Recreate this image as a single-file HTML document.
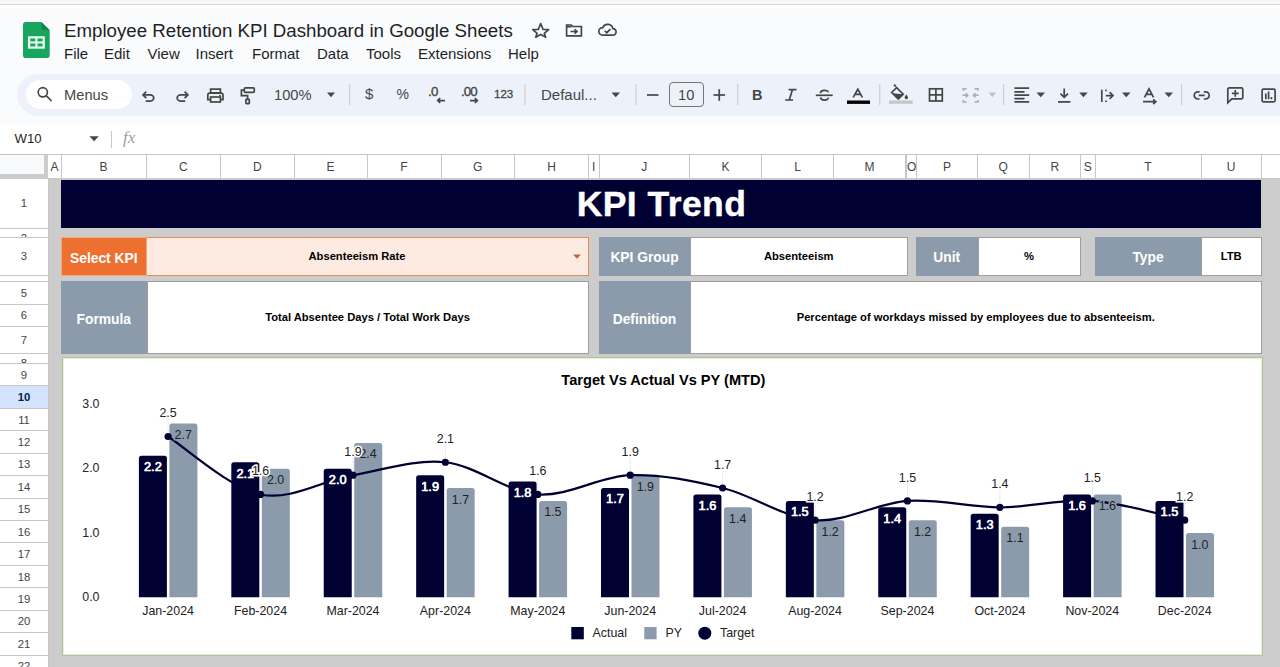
<!DOCTYPE html>
<html><head><meta charset="utf-8">
<style>
*{box-sizing:border-box;margin:0;padding:0}
html,body{width:1280px;height:667px;overflow:hidden;background:#f9fbfd;font-family:"Liberation Sans",sans-serif}
body{position:relative}
.a{position:absolute}
.t{position:absolute;white-space:nowrap;line-height:1}
.cell{position:absolute;display:flex;align-items:center;justify-content:center;white-space:nowrap;font-weight:bold;line-height:1}
.lab{background:#8c9bab;color:#fff;font-size:13.8px}
.val{background:#fff;color:#000;font-size:11.2px;border:1px solid #9e9e9e}
.ch{position:absolute;top:155px;height:23px;display:flex;align-items:center;justify-content:center;color:#444;font-size:12px;background:#fff}
.rh{position:absolute;left:0;width:48px;color:#444;font-size:11.3px;background:#fff;overflow:hidden}
svg text{font-family:"Liberation Sans",sans-serif}
</style></head><body>
<div class="a" style="left:0;top:0;width:1280px;height:4px;background:#f8f8f8"></div><div class="a" style="left:0;top:4px;width:1280px;height:1px;background:#dcdcdc"></div><div class="a" style="left:0;top:5px;width:1280px;height:2.5px;background:#fff"></div>
<svg class="a" style="left:22.5px;top:21.8px" width="28" height="37" viewBox="0 0 28 37">
<path d="M2.8 0H18.4L26.7 8.3V33.3A2.8 2.8 0 0 1 23.9 36.1H2.8A2.8 2.8 0 0 1 0 33.3V2.8A2.8 2.8 0 0 1 2.8 0Z" fill="#18a55d"/>
<path d="M18.4 0L26.7 8.3H20.9A2.5 2.5 0 0 1 18.4 5.8Z" fill="#0f8a48"/>
<rect x="6.1" y="15.35" width="14.6" height="10.2" fill="none" stroke="#e8f7ee" stroke-width="2.3"/>
<line x1="6.1" y1="20.45" x2="20.7" y2="20.45" stroke="#e8f7ee" stroke-width="2.1"/>
<line x1="13.4" y1="15.35" x2="13.4" y2="25.55" stroke="#e8f7ee" stroke-width="2.1"/>
</svg>
<div class="t" style="left:64px;top:21.5px;font-size:18.7px;color:#1f1f1f">Employee Retention KPI Dashboard in Google Sheets</div>
<div class="t" style="left:64px;top:45.5px;font-size:15px;color:#1f1f1f">File</div>
<div class="t" style="left:104px;top:45.5px;font-size:15px;color:#1f1f1f">Edit</div>
<div class="t" style="left:147.5px;top:45.5px;font-size:15px;color:#1f1f1f">View</div>
<div class="t" style="left:195.5px;top:45.5px;font-size:15px;color:#1f1f1f">Insert</div>
<div class="t" style="left:252px;top:45.5px;font-size:15px;color:#1f1f1f">Format</div>
<div class="t" style="left:317px;top:45.5px;font-size:15px;color:#1f1f1f">Data</div>
<div class="t" style="left:366px;top:45.5px;font-size:15px;color:#1f1f1f">Tools</div>
<div class="t" style="left:418px;top:45.5px;font-size:15px;color:#1f1f1f">Extensions</div>
<div class="t" style="left:508px;top:45.5px;font-size:15px;color:#1f1f1f">Help</div>
<div class="a" style="left:17px;top:74px;width:1300px;height:42px;border-radius:21px;background:#edf2fa"></div>
<div class="a" style="left:26px;top:80px;width:105.5px;height:29px;border-radius:14.5px;background:#fff"></div>
<div class="t" style="left:64px;top:87.5px;font-size:14.7px;color:#444746">Menus</div>
<div class="t" style="left:274px;top:87.5px;font-size:14.7px;color:#444746">100%</div>
<div class="t" style="left:541px;top:86.5px;font-size:15px;color:#444746">Defaul...</div>
<div class="t" style="left:494px;top:88.8px;font-size:11.5px;color:#444746;-webkit-text-stroke:0.3px #444746">123</div>
<div class="t" style="left:678px;top:87.5px;font-size:14.7px;color:#444746">10</div>
<div class="a" style="left:669px;top:82px;width:35px;height:24.5px;border:1px solid #747775;border-radius:4px"></div>
<div class="a" style="left:0;top:123.5px;width:1280px;height:31px;background:#fff;border-bottom:1px solid #c7c7c7"></div>
<div class="t" style="left:14.5px;top:131.5px;font-size:13.2px;color:#1f1f1f">W10</div>
<div class="a" style="left:111px;top:130.5px;width:1px;height:17px;background:#c7c7c7"></div>
<div class="t" style="left:123px;top:129px;font-size:17px;color:#9aa0a6;font-family:'Liberation Serif',serif;font-style:italic">fx</div>
<div class="t" style="left:365px;top:86.3px;font-size:15px;color:#444746">$</div>
<div class="t" style="left:396.5px;top:86.7px;font-size:14px;color:#444746">%</div>
<div class="t" style="left:428px;top:85.3px;font-size:13.3px;color:#444746;letter-spacing:-0.6px;-webkit-text-stroke:0.35px #444746">.0</div>
<div class="t" style="left:461px;top:85.3px;font-size:13.3px;color:#444746;letter-spacing:-0.9px;-webkit-text-stroke:0.35px #444746">.00</div>
<div class="t" style="left:752px;top:88.3px;font-size:14.5px;font-weight:bold;color:#444746">B</div>
<svg class="a" style="left:0;top:0" width="1280" height="160"><circle cx="42.8" cy="92.3" r="4.6" fill="none" stroke="#444746" stroke-width="1.7" stroke-width="1.8"/><line x1="46.2" y1="95.7" x2="51.5" y2="101" fill="none" stroke="#444746" stroke-width="1.7" stroke-width="1.9"/><polyline points="146.3,91.6 143,94.9 146.3,98.2" fill="none" stroke="#444746" stroke-width="1.7"/><path d="M143.5 94.9H150.3A3.45 3.1 0 0 1 150.3 101.1H145.7" fill="none" stroke="#444746" stroke-width="1.7"/><polyline points="184.6,91.6 187.9,94.9 184.6,98.2" fill="none" stroke="#444746" stroke-width="1.7"/><path d="M187.4 94.9H180.6A3.45 3.1 0 0 0 180.6 101.1H185.2" fill="none" stroke="#444746" stroke-width="1.7"/><rect x="210.6" y="89.1" width="9.8" height="3.8" fill="none" stroke="#444746" stroke-width="1.7"/><path d="M210.6 99.6H207.8V95.2A2 2 0 0 1 209.8 93.2H221A2 2 0 0 1 223 95.2V99.6H220.4" fill="none" stroke="#444746" stroke-width="1.7"/><rect x="210.6" y="97" width="9.8" height="5" fill="none" stroke="#444746" stroke-width="1.7"/><circle cx="220" cy="95.6" r="0.9" fill="#444746"/><rect x="244.3" y="87.9" width="10" height="4.4" rx="1" fill="none" stroke="#444746" stroke-width="1.7"/><path d="M244.3 90.1H241.4V95.6H247.6V99.3" fill="none" stroke="#444746" stroke-width="1.7"/><rect x="245.9" y="99.3" width="3.4" height="4.3" rx="0.6" fill="none" stroke="#444746" stroke-width="1.7"/><polygon points="327,92.5 335,92.5 331.0,97.2" fill="#444746"/><polygon points="611.5,92.5 620,92.5 615.75,97.2" fill="#444746"/><polygon points="1036.5,92.5 1045.0,92.5 1040.75,97.2" fill="#444746"/><polygon points="1079.2,92.5 1087.7,92.5 1083.45,97.2" fill="#444746"/><polygon points="1122,92.5 1130.5,92.5 1126.25,97.2" fill="#444746"/><polygon points="1164.5,92.5 1173.0,92.5 1168.75,97.2" fill="#444746"/><polygon points="988.5,92.5 996,92.5 992.25,97.2" fill="#bdc1c6"/><polygon points="89.4,136.3 98.8,136.3 94.1,141.2" fill="#444746"/><line x1="349.7" y1="84" x2="349.7" y2="105" stroke="#c7c7c7" stroke-width="1"/><line x1="525" y1="84" x2="525" y2="105" stroke="#c7c7c7" stroke-width="1"/><line x1="636" y1="84" x2="636" y2="105" stroke="#c7c7c7" stroke-width="1"/><line x1="737.8" y1="84" x2="737.8" y2="105" stroke="#c7c7c7" stroke-width="1"/><line x1="879.8" y1="84" x2="879.8" y2="105" stroke="#c7c7c7" stroke-width="1"/><line x1="1003.7" y1="84" x2="1003.7" y2="105" stroke="#c7c7c7" stroke-width="1"/><line x1="1181.6" y1="84" x2="1181.6" y2="105" stroke="#c7c7c7" stroke-width="1"/><path d="M445 100.6H437.7M440.2 98.2L437.7 100.6L440.2 103" fill="none" stroke="#444746" stroke-width="1.7" stroke-width="1.5"/><path d="M470 100.6H477.3M474.8 98.2L477.3 100.6L474.8 103" fill="none" stroke="#444746" stroke-width="1.7" stroke-width="1.5"/><line x1="647" y1="95" x2="658.5" y2="95" fill="none" stroke="#444746" stroke-width="1.7"/><line x1="713.5" y1="95" x2="725" y2="95" fill="none" stroke="#444746" stroke-width="1.7"/><line x1="719.25" y1="89.2" x2="719.25" y2="100.8" fill="none" stroke="#444746" stroke-width="1.7"/><path d="M788.6 89.7H796.5M785.2 100H793.1M792.4 89.7L789.3 100" fill="none" stroke="#444746" stroke-width="1.7" stroke-width="1.9"/><path d="M815.8 95.3H832.7" fill="none" stroke="#444746" stroke-width="1.7"/><path d="M820.4 93.2C820.4 89.6 828.2 89.4 828.2 92.2M820.6 97.4C820.8 100.9 828.4 101 828.3 97.6" fill="none" stroke="#444746" stroke-width="1.7"/><path d="M853.2 97.3L857.8 89.3L862.4 97.3M854.9 94.3H860.7" fill="none" stroke="#444746" stroke-width="1.7" stroke-width="1.6"/><rect x="847" y="100.5" width="23" height="3.4" fill="#000"/><path d="M894 84.6L896 86.6" fill="none" stroke="#444746" stroke-width="1.7"/><path d="M896.6 87.6L903.2 94.2L898.3 99.1L891.7 92.5Z" fill="none" stroke="#444746" stroke-width="1.7"/><path d="M892.4 93.2L903.0 94.2L898.3 99.1Z" fill="#444746"/><path d="M906.3 94.4C905.2 96 904.6 96.8 904.6 97.6A1.7 1.7 0 0 0 908 97.6C908 96.8 907.4 96 906.3 94.4Z" fill="#444746"/><rect x="889" y="100.5" width="23.6" height="3.3" fill="#c4c7c5"/><rect x="929.5" y="88.8" width="12.8" height="12.2" fill="none" stroke="#444746" stroke-width="1.7"/><path d="M935.9 88.8V101M929.5 94.9H942.3" fill="none" stroke="#444746" stroke-width="1.7"/><path d="M963.2 90.8V88.7H966.6M963.2 99.9V102H966.6M978 90.8V88.7H974.6M978 99.9V102H974.6M962.5 95.3H967.6M965.7 93.2L967.8 95.3L965.7 97.4M978.7 95.3H973.6M975.5 93.2L973.4 95.3L975.5 97.4" fill="none" stroke="#a9adb2" stroke-width="1.6"/><path d="M1014.4 88.2H1029.2M1014.4 91.8H1024.5M1014.4 95.2H1029.2M1014.4 98.6H1024.5M1014.4 101.9H1029.2" fill="none" stroke="#444746" stroke-width="1.7" stroke-width="1.5"/><path d="M1064.2 88.4V97.4M1060.4 93.6L1064.2 97.4L1068 93.6M1058 101.9H1070.4" fill="none" stroke="#444746" stroke-width="1.7" stroke-width="1.7"/><path d="M1101.8 89.7V102M1105.8 95.6H1113M1109.6 92.2L1113 95.6L1109.6 99M1106 89.7V91.2M1106 100.5V102" fill="none" stroke="#444746" stroke-width="1.7" stroke-width="1.7"/><path d="M1144.5 97.4L1149 88.8L1153.5 97.4M1146 94.3H1152" fill="none" stroke="#444746" stroke-width="1.7" stroke-width="1.6"/><path d="M1143 101.7H1155.5M1153.2 99.4L1155.8 101.7L1153.2 104" fill="none" stroke="#444746" stroke-width="1.7" stroke-width="1.6"/><path d="M1199.6 91.8H1197.8A3.6 3.6 0 0 0 1197.8 99H1199.6M1203.8 91.8H1205.6A3.6 3.6 0 0 1 1205.6 99H1203.8M1198.7 95.4H1204.7" fill="none" stroke="#444746" stroke-width="1.7" stroke-width="1.8"/><path d="M1227.8 102.8V89.2A1.3 1.3 0 0 1 1229.1 87.9H1241.5A1.3 1.3 0 0 1 1242.8 89.2V97.5A1.3 1.3 0 0 1 1241.5 98.8H1231.8Z" fill="none" stroke="#444746" stroke-width="1.7" stroke-width="1.7"/><path d="M1235.3 89.9V96.7M1231.9 93.3H1238.7" fill="none" stroke="#444746" stroke-width="1.7" stroke-width="1.7"/><rect x="1262.1" y="89.1" width="13" height="12.8" rx="1.3" fill="none" stroke="#444746" stroke-width="1.7" stroke-width="1.7"/><path d="M1265.8 93.4V99.3M1268.6 91.6V99.3M1271.4 97V99.3" fill="none" stroke="#444746" stroke-width="1.7" stroke-width="1.6"/><path d="M540.7 23.6L543 29.3L548.6 29.6L544.3 33.4L545.7 37.2L540.7 34.4L535.7 37.2L537.1 33.4L532.8 29.6L538.4 29.3Z" fill="none" stroke="#444746" stroke-width="1.7" stroke-width="1.5" stroke-linejoin="round"/><path d="M566.6 25H571.2L572.8 26.5H581.4V35.8H566.6Z" fill="none" stroke="#444746" stroke-width="1.7" stroke-width="1.6"/><path d="M566.6 26.7H571.6" fill="none" stroke="#444746" stroke-width="1.7" stroke-width="1.8"/><path d="M570.5 31.5H577M574.6 29.3L577 31.5L574.6 33.7" fill="none" stroke="#444746" stroke-width="1.7" stroke-width="1.5"/><path d="M602.5 35.2H612.7A3.3 3.3 0 0 0 612.9 28.6A5.4 5.4 0 0 0 602.7 27.6A3.8 3.8 0 0 0 602.5 35.2Z" fill="none" stroke="#444746" stroke-width="1.7" stroke-width="1.5"/><path d="M604.8 30.8L606.8 32.7L610.4 29.1" fill="none" stroke="#444746" stroke-width="1.7" stroke-width="1.5"/></svg>
<div class="a" style="left:48px;top:178.5px;width:1232px;height:500px;background:#cccccc"></div>
<div class="a" style="left:0;top:154px;width:1280px;height:25px;background:#fff;border-top:1px solid #c7c7c7;border-bottom:1px solid #c7c7c7"></div>
<div class="ch" style="left:48px;width:13px">A</div>
<div class="ch" style="left:61px;width:85px">B</div>
<div class="ch" style="left:146px;width:74.5px">C</div>
<div class="ch" style="left:220.5px;width:73.5px">D</div>
<div class="ch" style="left:294px;width:73px">E</div>
<div class="ch" style="left:367px;width:74px">F</div>
<div class="ch" style="left:441px;width:73.5px">G</div>
<div class="ch" style="left:514.5px;width:74.0px">H</div>
<div class="ch" style="left:588.5px;width:10.5px">I</div>
<div class="ch" style="left:599px;width:90.5px">J</div>
<div class="ch" style="left:689.5px;width:72.0px">K</div>
<div class="ch" style="left:761.5px;width:72.0px">L</div>
<div class="ch" style="left:833.5px;width:72.0px">M</div>
<div class="a" style="left:905.5px;top:155px;width:2.0px;height:23px;border-left:1px solid #c7c7c7;border-right:1px solid #c7c7c7"></div>
<div class="ch" style="left:907px;width:9.5px">O</div>
<div class="ch" style="left:916.5px;width:61.0px">P</div>
<div class="ch" style="left:977.5px;width:51.5px">Q</div>
<div class="ch" style="left:1029px;width:51.5px">R</div>
<div class="ch" style="left:1080.5px;width:14.5px">S</div>
<div class="ch" style="left:1095px;width:106px">T</div>
<div class="ch" style="left:1201px;width:60px">U</div>
<div class="ch" style="left:1261px;width:139px"></div>
<div class="a" style="left:60.5px;top:155px;width:1px;height:23.5px;background:#c7c7c7"></div>
<div class="a" style="left:145.5px;top:155px;width:1px;height:23.5px;background:#c7c7c7"></div>
<div class="a" style="left:220.0px;top:155px;width:1px;height:23.5px;background:#c7c7c7"></div>
<div class="a" style="left:293.5px;top:155px;width:1px;height:23.5px;background:#c7c7c7"></div>
<div class="a" style="left:366.5px;top:155px;width:1px;height:23.5px;background:#c7c7c7"></div>
<div class="a" style="left:440.5px;top:155px;width:1px;height:23.5px;background:#c7c7c7"></div>
<div class="a" style="left:514.0px;top:155px;width:1px;height:23.5px;background:#c7c7c7"></div>
<div class="a" style="left:588.0px;top:155px;width:1px;height:23.5px;background:#c7c7c7"></div>
<div class="a" style="left:598.5px;top:155px;width:1px;height:23.5px;background:#c7c7c7"></div>
<div class="a" style="left:689.0px;top:155px;width:1px;height:23.5px;background:#c7c7c7"></div>
<div class="a" style="left:761.0px;top:155px;width:1px;height:23.5px;background:#c7c7c7"></div>
<div class="a" style="left:833.0px;top:155px;width:1px;height:23.5px;background:#c7c7c7"></div>
<div class="a" style="left:905.0px;top:155px;width:1px;height:23.5px;background:#c7c7c7"></div>
<div class="a" style="left:916.0px;top:155px;width:1px;height:23.5px;background:#c7c7c7"></div>
<div class="a" style="left:977.0px;top:155px;width:1px;height:23.5px;background:#c7c7c7"></div>
<div class="a" style="left:1028.5px;top:155px;width:1px;height:23.5px;background:#c7c7c7"></div>
<div class="a" style="left:1080.0px;top:155px;width:1px;height:23.5px;background:#c7c7c7"></div>
<div class="a" style="left:1094.5px;top:155px;width:1px;height:23.5px;background:#c7c7c7"></div>
<div class="a" style="left:1200.5px;top:155px;width:1px;height:23.5px;background:#c7c7c7"></div>
<div class="a" style="left:1260.5px;top:155px;width:1px;height:23.5px;background:#c7c7c7"></div>
<div class="a" style="left:1399.5px;top:155px;width:1px;height:23.5px;background:#c7c7c7"></div>
<div class="a" style="left:0;top:155px;width:44px;height:19px;background:#f8f9fa"></div>
<div class="a" style="left:0;top:174px;width:48px;height:4.5px;background:#cccccc"></div>
<div class="a" style="left:44px;top:155px;width:4px;height:23.5px;background:#cccccc"></div>
<div class="rh" style="top:178.50px;height:49.90px;"><div style="position:absolute;left:0;top:0;width:48px;height:49.90px;display:flex;align-items:center;justify-content:center"><span style="position:relative;top:0px">1</span></div></div>
<div class="rh" style="top:228.40px;height:8.90px;"><div style="position:absolute;left:0;top:0;width:48px;height:18.50px;display:flex;align-items:center;justify-content:center"><span style="position:relative;top:0px">2</span></div></div>
<div class="rh" style="top:237.30px;height:38.30px;"><div style="position:absolute;left:0;top:0;width:48px;height:38.30px;display:flex;align-items:center;justify-content:center"><span style="position:relative;top:0px">3</span></div></div>
<div class="rh" style="top:275.60px;height:5.80px;"><div style="position:absolute;left:0;top:0;width:48px;height:18.50px;display:flex;align-items:center;justify-content:center"><span style="position:relative;top:0px">4</span></div></div>
<div class="rh" style="top:281.40px;height:23.00px;"><div style="position:absolute;left:0;top:0;width:48px;height:23.00px;display:flex;align-items:center;justify-content:center"><span style="position:relative;top:0px">5</span></div></div>
<div class="rh" style="top:304.40px;height:21.80px;"><div style="position:absolute;left:0;top:0;width:48px;height:21.80px;display:flex;align-items:center;justify-content:center"><span style="position:relative;top:0px">6</span></div></div>
<div class="rh" style="top:326.20px;height:27.40px;"><div style="position:absolute;left:0;top:0;width:48px;height:27.40px;display:flex;align-items:center;justify-content:center"><span style="position:relative;top:0px">7</span></div></div>
<div class="rh" style="top:353.60px;height:9.90px;"><div style="position:absolute;left:0;top:0;width:48px;height:18.50px;display:flex;align-items:center;justify-content:center"><span style="position:relative;top:0px">8</span></div></div>
<div class="rh" style="top:363.50px;height:22.42px;"><div style="position:absolute;left:0;top:0;width:48px;height:22.42px;display:flex;align-items:center;justify-content:center"><span style="position:relative;top:0px">9</span></div></div>
<div class="rh" style="top:385.92px;height:22.42px;background:#d3e3fd;color:#041e49;font-weight:bold;"><div style="position:absolute;left:0;top:0;width:48px;height:22.42px;display:flex;align-items:center;justify-content:center"><span style="position:relative;top:0px">10</span></div></div>
<div class="rh" style="top:408.35px;height:22.42px;"><div style="position:absolute;left:0;top:0;width:48px;height:22.42px;display:flex;align-items:center;justify-content:center"><span style="position:relative;top:0px">11</span></div></div>
<div class="rh" style="top:430.77px;height:22.42px;"><div style="position:absolute;left:0;top:0;width:48px;height:22.42px;display:flex;align-items:center;justify-content:center"><span style="position:relative;top:0px">12</span></div></div>
<div class="rh" style="top:453.19px;height:22.42px;"><div style="position:absolute;left:0;top:0;width:48px;height:22.42px;display:flex;align-items:center;justify-content:center"><span style="position:relative;top:0px">13</span></div></div>
<div class="rh" style="top:475.62px;height:22.42px;"><div style="position:absolute;left:0;top:0;width:48px;height:22.42px;display:flex;align-items:center;justify-content:center"><span style="position:relative;top:0px">14</span></div></div>
<div class="rh" style="top:498.04px;height:22.42px;"><div style="position:absolute;left:0;top:0;width:48px;height:22.42px;display:flex;align-items:center;justify-content:center"><span style="position:relative;top:0px">15</span></div></div>
<div class="rh" style="top:520.46px;height:22.42px;"><div style="position:absolute;left:0;top:0;width:48px;height:22.42px;display:flex;align-items:center;justify-content:center"><span style="position:relative;top:0px">16</span></div></div>
<div class="rh" style="top:542.88px;height:22.42px;"><div style="position:absolute;left:0;top:0;width:48px;height:22.42px;display:flex;align-items:center;justify-content:center"><span style="position:relative;top:0px">17</span></div></div>
<div class="rh" style="top:565.31px;height:22.42px;"><div style="position:absolute;left:0;top:0;width:48px;height:22.42px;display:flex;align-items:center;justify-content:center"><span style="position:relative;top:0px">18</span></div></div>
<div class="rh" style="top:587.73px;height:22.42px;"><div style="position:absolute;left:0;top:0;width:48px;height:22.42px;display:flex;align-items:center;justify-content:center"><span style="position:relative;top:0px">19</span></div></div>
<div class="rh" style="top:610.15px;height:22.42px;"><div style="position:absolute;left:0;top:0;width:48px;height:22.42px;display:flex;align-items:center;justify-content:center"><span style="position:relative;top:0px">20</span></div></div>
<div class="rh" style="top:632.58px;height:22.42px;"><div style="position:absolute;left:0;top:0;width:48px;height:22.42px;display:flex;align-items:center;justify-content:center"><span style="position:relative;top:0px">21</span></div></div>
<div class="rh" style="top:655.00px;height:22.42px;"><div style="position:absolute;left:0;top:0;width:48px;height:22.42px;display:flex;align-items:center;justify-content:center"><span style="position:relative;top:0px">22</span></div></div>
<div class="a" style="left:0;top:227.90px;width:48px;height:1px;background:#c7c7c7"></div>
<div class="a" style="left:0;top:236.80px;width:48px;height:1px;background:#c7c7c7"></div>
<div class="a" style="left:0;top:275.10px;width:48px;height:1px;background:#c7c7c7"></div>
<div class="a" style="left:0;top:280.90px;width:48px;height:1px;background:#c7c7c7"></div>
<div class="a" style="left:0;top:303.90px;width:48px;height:1px;background:#c7c7c7"></div>
<div class="a" style="left:0;top:325.70px;width:48px;height:1px;background:#c7c7c7"></div>
<div class="a" style="left:0;top:353.10px;width:48px;height:1px;background:#c7c7c7"></div>
<div class="a" style="left:0;top:363.00px;width:48px;height:1px;background:#c7c7c7"></div>
<div class="a" style="left:0;top:385.42px;width:48px;height:1px;background:#c7c7c7"></div>
<div class="a" style="left:0;top:407.85px;width:48px;height:1px;background:#c7c7c7"></div>
<div class="a" style="left:0;top:430.27px;width:48px;height:1px;background:#c7c7c7"></div>
<div class="a" style="left:0;top:452.69px;width:48px;height:1px;background:#c7c7c7"></div>
<div class="a" style="left:0;top:475.12px;width:48px;height:1px;background:#c7c7c7"></div>
<div class="a" style="left:0;top:497.54px;width:48px;height:1px;background:#c7c7c7"></div>
<div class="a" style="left:0;top:519.96px;width:48px;height:1px;background:#c7c7c7"></div>
<div class="a" style="left:0;top:542.38px;width:48px;height:1px;background:#c7c7c7"></div>
<div class="a" style="left:0;top:564.81px;width:48px;height:1px;background:#c7c7c7"></div>
<div class="a" style="left:0;top:587.23px;width:48px;height:1px;background:#c7c7c7"></div>
<div class="a" style="left:0;top:609.65px;width:48px;height:1px;background:#c7c7c7"></div>
<div class="a" style="left:0;top:632.08px;width:48px;height:1px;background:#c7c7c7"></div>
<div class="a" style="left:0;top:654.50px;width:48px;height:1px;background:#c7c7c7"></div>
<div class="a" style="left:0;top:676.92px;width:48px;height:1px;background:#c7c7c7"></div>
<div class="a" style="left:47.5px;top:178.5px;width:1px;height:500px;background:#c7c7c7"></div>
<div class="cell" style="left:61px;top:179.5px;width:1200px;height:48.2px;background:#000033;color:#fff;font-size:35.5px;letter-spacing:0.45px;padding-left:1px;padding-top:1.5px;-webkit-text-stroke:0.4px #fff">KPI Trend</div>
<div class="cell" style="left:61px;top:237px;width:85.5px;height:38.5px;background:#ed7031;color:#fff;font-size:13.8px;border:1px solid #f3a77c;padding-top:5px">Select KPI</div>
<div class="cell" style="left:146.5px;top:237px;width:442px;height:38.5px;background:#fdebe2;color:#000;font-size:11.2px;border:1px solid #ec8a55;border-left:none;padding-right:20px">Absenteeism Rate</div>
<svg class="a" style="left:572px;top:253px" width="10" height="7"><polygon points="1,1.5 9,1.5 5,5.8" fill="#c0673a"/></svg>
<div class="cell lab" style="left:599px;top:237px;width:91px;height:38.5px;padding-top:3px">KPI Group</div>
<div class="cell val" style="left:690px;top:237px;width:217.5px;height:38.5px">Absenteeism</div>
<div class="cell lab" style="left:916px;top:237px;width:61.5px;height:38.5px;padding-top:3px">Unit</div>
<div class="cell val" style="left:977.5px;top:237px;width:103px;height:38.5px">%</div>
<div class="cell lab" style="left:1095px;top:237px;width:106px;height:38.5px;padding-top:3px">Type</div>
<div class="cell val" style="left:1201px;top:237px;width:60.5px;height:38.5px">LTB</div>
<div class="cell lab" style="left:61px;top:281.2px;width:85.5px;height:72.6px;padding-top:4px">Formula</div>
<div class="cell val" style="left:146.5px;top:281.2px;width:442px;height:72.6px">Total Absentee Days / Total Work Days</div>
<div class="cell lab" style="left:599px;top:281.2px;width:91px;height:72.6px;padding-top:4px">Definition</div>
<div class="cell val" style="left:690px;top:281.2px;width:571.5px;height:72.6px">Percentage of workdays missed by employees due to absenteeism.</div>
<div class="a" style="left:62px;top:357.3px;width:1200.5px;height:298.6px;background:#fff;border:1.3px solid #adc497;box-shadow:inset 0 0 0 1px #e6f0df"></div>
<svg class="a" style="left:0;top:0" width="1280" height="667"><text x="663.4" y="384.8" text-anchor="middle" font-size="14.6" font-weight="bold" fill="#000">Target Vs Actual Vs PY (MTD)</text><text x="99.5" y="601.00" text-anchor="end" font-size="12.4" fill="#222">0.0</text><text x="99.5" y="536.60" text-anchor="end" font-size="12.4" fill="#222">1.0</text><text x="99.5" y="472.20" text-anchor="end" font-size="12.4" fill="#222">2.0</text><text x="99.5" y="407.80" text-anchor="end" font-size="12.4" fill="#222">3.0</text><path d="M138.90 597.30V458.32Q138.90 455.82 141.40 455.82H164.40Q166.90 455.82 166.90 458.32V597.30Z" fill="#000033"/><path d="M169.40 597.30V426.12Q169.40 423.62 171.90 423.62H194.90Q197.40 423.62 197.40 426.12V597.30Z" fill="#8c9bab"/><text x="168.10" y="614.75" text-anchor="middle" font-size="12.4" fill="#222">Jan-2024</text><path d="M231.32 597.30V464.76Q231.32 462.26 233.82 462.26H256.82Q259.32 462.26 259.32 464.76V597.30Z" fill="#000033"/><path d="M261.82 597.30V471.20Q261.82 468.70 264.32 468.70H287.32Q289.82 468.70 289.82 471.20V597.30Z" fill="#8c9bab"/><text x="260.52" y="614.75" text-anchor="middle" font-size="12.4" fill="#222">Feb-2024</text><path d="M323.74 597.30V471.20Q323.74 468.70 326.24 468.70H349.24Q351.74 468.70 351.74 471.20V597.30Z" fill="#000033"/><path d="M354.24 597.30V445.44Q354.24 442.94 356.74 442.94H379.74Q382.24 442.94 382.24 445.44V597.30Z" fill="#8c9bab"/><text x="352.94" y="614.75" text-anchor="middle" font-size="12.4" fill="#222">Mar-2024</text><path d="M416.16 597.30V477.64Q416.16 475.14 418.66 475.14H441.66Q444.16 475.14 444.16 477.64V597.30Z" fill="#000033"/><path d="M446.66 597.30V490.52Q446.66 488.02 449.16 488.02H472.16Q474.66 488.02 474.66 490.52V597.30Z" fill="#8c9bab"/><text x="445.36" y="614.75" text-anchor="middle" font-size="12.4" fill="#222">Apr-2024</text><path d="M508.58 597.30V484.08Q508.58 481.58 511.08 481.58H534.08Q536.58 481.58 536.58 484.08V597.30Z" fill="#000033"/><path d="M539.08 597.30V503.40Q539.08 500.90 541.58 500.90H564.58Q567.08 500.90 567.08 503.40V597.30Z" fill="#8c9bab"/><text x="537.78" y="614.75" text-anchor="middle" font-size="12.4" fill="#222">May-2024</text><path d="M601.00 597.30V490.52Q601.00 488.02 603.50 488.02H626.50Q629.00 488.02 629.00 490.52V597.30Z" fill="#000033"/><path d="M631.50 597.30V477.64Q631.50 475.14 634.00 475.14H657.00Q659.50 475.14 659.50 477.64V597.30Z" fill="#8c9bab"/><text x="630.20" y="614.75" text-anchor="middle" font-size="12.4" fill="#222">Jun-2024</text><path d="M693.42 597.30V496.96Q693.42 494.46 695.92 494.46H718.92Q721.42 494.46 721.42 496.96V597.30Z" fill="#000033"/><path d="M723.92 597.30V509.84Q723.92 507.34 726.42 507.34H749.42Q751.92 507.34 751.92 509.84V597.30Z" fill="#8c9bab"/><text x="722.62" y="614.75" text-anchor="middle" font-size="12.4" fill="#222">Jul-2024</text><path d="M785.84 597.30V503.40Q785.84 500.90 788.34 500.90H811.34Q813.84 500.90 813.84 503.40V597.30Z" fill="#000033"/><path d="M816.34 597.30V522.72Q816.34 520.22 818.84 520.22H841.84Q844.34 520.22 844.34 522.72V597.30Z" fill="#8c9bab"/><text x="815.04" y="614.75" text-anchor="middle" font-size="12.4" fill="#222">Aug-2024</text><path d="M878.26 597.30V509.84Q878.26 507.34 880.76 507.34H903.76Q906.26 507.34 906.26 509.84V597.30Z" fill="#000033"/><path d="M908.76 597.30V522.72Q908.76 520.22 911.26 520.22H934.26Q936.76 520.22 936.76 522.72V597.30Z" fill="#8c9bab"/><text x="907.46" y="614.75" text-anchor="middle" font-size="12.4" fill="#222">Sep-2024</text><path d="M970.68 597.30V516.28Q970.68 513.78 973.18 513.78H996.18Q998.68 513.78 998.68 516.28V597.30Z" fill="#000033"/><path d="M1001.18 597.30V529.16Q1001.18 526.66 1003.68 526.66H1026.68Q1029.18 526.66 1029.18 529.16V597.30Z" fill="#8c9bab"/><text x="999.88" y="614.75" text-anchor="middle" font-size="12.4" fill="#222">Oct-2024</text><path d="M1063.10 597.30V496.96Q1063.10 494.46 1065.60 494.46H1088.60Q1091.10 494.46 1091.10 496.96V597.30Z" fill="#000033"/><path d="M1093.60 597.30V496.96Q1093.60 494.46 1096.10 494.46H1119.10Q1121.60 494.46 1121.60 496.96V597.30Z" fill="#8c9bab"/><text x="1092.30" y="614.75" text-anchor="middle" font-size="12.4" fill="#222">Nov-2024</text><path d="M1155.52 597.30V503.40Q1155.52 500.90 1158.02 500.90H1181.02Q1183.52 500.90 1183.52 503.40V597.30Z" fill="#000033"/><path d="M1186.02 597.30V535.60Q1186.02 533.10 1188.52 533.10H1211.52Q1214.02 533.10 1214.02 535.60V597.30Z" fill="#8c9bab"/><text x="1184.72" y="614.75" text-anchor="middle" font-size="12.4" fill="#222">Dec-2024</text><path d="M168.10 436.50C183.50 446.16 229.71 488.02 260.52 494.46C291.33 500.90 322.13 480.51 352.94 475.14C383.75 469.77 414.55 459.04 445.36 462.26C476.17 465.48 506.97 492.31 537.78 494.46C568.59 496.61 599.39 476.21 630.20 475.14C661.01 474.07 691.81 480.51 722.62 488.02C753.43 495.53 784.23 518.07 815.04 520.22C845.85 522.37 876.65 503.05 907.46 500.90C938.27 498.75 969.07 507.34 999.88 507.34C1030.69 507.34 1061.49 498.75 1092.30 500.90C1123.11 503.05 1169.32 517.00 1184.72 520.22" fill="none" stroke="#000033" stroke-width="2.2"/><circle cx="168.10" cy="436.50" r="3.6" fill="#000033"/><circle cx="260.52" cy="494.46" r="3.6" fill="#000033"/><circle cx="352.94" cy="475.14" r="3.6" fill="#000033"/><circle cx="445.36" cy="462.26" r="3.6" fill="#000033"/><circle cx="537.78" cy="494.46" r="3.6" fill="#000033"/><circle cx="630.20" cy="475.14" r="3.6" fill="#000033"/><circle cx="722.62" cy="488.02" r="3.6" fill="#000033"/><circle cx="815.04" cy="520.22" r="3.6" fill="#000033"/><circle cx="907.46" cy="500.90" r="3.6" fill="#000033"/><circle cx="999.88" cy="507.34" r="3.6" fill="#000033"/><circle cx="1092.30" cy="500.90" r="3.6" fill="#000033"/><circle cx="1184.72" cy="520.22" r="3.6" fill="#000033"/><text x="152.90" y="471.27" text-anchor="middle" font-size="12.8" fill="#fff" stroke="#000033" stroke-width="3.4" paint-order="stroke">2.2</text><text x="152.90" y="471.27" text-anchor="middle" font-size="12.8" fill="#fff" stroke="#fff" stroke-width="0.45">2.2</text><text x="183.20" y="439.17" text-anchor="middle" font-size="12.4" fill="#222" stroke="#8c9bab" stroke-width="3" paint-order="stroke">2.7</text><text x="245.32" y="477.71" text-anchor="middle" font-size="12.8" fill="#fff" stroke="#000033" stroke-width="3.4" paint-order="stroke">2.1</text><text x="245.32" y="477.71" text-anchor="middle" font-size="12.8" fill="#fff" stroke="#fff" stroke-width="0.45">2.1</text><text x="275.62" y="484.25" text-anchor="middle" font-size="12.4" fill="#222" stroke="#8c9bab" stroke-width="3" paint-order="stroke">2.0</text><text x="337.74" y="484.15" text-anchor="middle" font-size="12.8" fill="#fff" stroke="#000033" stroke-width="3.4" paint-order="stroke">2.0</text><text x="337.74" y="484.15" text-anchor="middle" font-size="12.8" fill="#fff" stroke="#fff" stroke-width="0.45">2.0</text><text x="368.04" y="458.49" text-anchor="middle" font-size="12.4" fill="#222" stroke="#8c9bab" stroke-width="3" paint-order="stroke">2.4</text><text x="430.16" y="490.59" text-anchor="middle" font-size="12.8" fill="#fff" stroke="#000033" stroke-width="3.4" paint-order="stroke">1.9</text><text x="430.16" y="490.59" text-anchor="middle" font-size="12.8" fill="#fff" stroke="#fff" stroke-width="0.45">1.9</text><text x="460.46" y="503.57" text-anchor="middle" font-size="12.4" fill="#222" stroke="#8c9bab" stroke-width="3" paint-order="stroke">1.7</text><text x="522.58" y="497.03" text-anchor="middle" font-size="12.8" fill="#fff" stroke="#000033" stroke-width="3.4" paint-order="stroke">1.8</text><text x="522.58" y="497.03" text-anchor="middle" font-size="12.8" fill="#fff" stroke="#fff" stroke-width="0.45">1.8</text><text x="552.88" y="516.45" text-anchor="middle" font-size="12.4" fill="#222" stroke="#8c9bab" stroke-width="3" paint-order="stroke">1.5</text><text x="615.00" y="503.47" text-anchor="middle" font-size="12.8" fill="#fff" stroke="#000033" stroke-width="3.4" paint-order="stroke">1.7</text><text x="615.00" y="503.47" text-anchor="middle" font-size="12.8" fill="#fff" stroke="#fff" stroke-width="0.45">1.7</text><text x="645.30" y="490.69" text-anchor="middle" font-size="12.4" fill="#222" stroke="#8c9bab" stroke-width="3" paint-order="stroke">1.9</text><text x="707.42" y="509.91" text-anchor="middle" font-size="12.8" fill="#fff" stroke="#000033" stroke-width="3.4" paint-order="stroke">1.6</text><text x="707.42" y="509.91" text-anchor="middle" font-size="12.8" fill="#fff" stroke="#fff" stroke-width="0.45">1.6</text><text x="737.72" y="522.89" text-anchor="middle" font-size="12.4" fill="#222" stroke="#8c9bab" stroke-width="3" paint-order="stroke">1.4</text><text x="799.84" y="516.35" text-anchor="middle" font-size="12.8" fill="#fff" stroke="#000033" stroke-width="3.4" paint-order="stroke">1.5</text><text x="799.84" y="516.35" text-anchor="middle" font-size="12.8" fill="#fff" stroke="#fff" stroke-width="0.45">1.5</text><text x="830.14" y="535.77" text-anchor="middle" font-size="12.4" fill="#222" stroke="#8c9bab" stroke-width="3" paint-order="stroke">1.2</text><text x="892.26" y="522.79" text-anchor="middle" font-size="12.8" fill="#fff" stroke="#000033" stroke-width="3.4" paint-order="stroke">1.4</text><text x="892.26" y="522.79" text-anchor="middle" font-size="12.8" fill="#fff" stroke="#fff" stroke-width="0.45">1.4</text><text x="922.56" y="535.77" text-anchor="middle" font-size="12.4" fill="#222" stroke="#8c9bab" stroke-width="3" paint-order="stroke">1.2</text><text x="984.68" y="529.23" text-anchor="middle" font-size="12.8" fill="#fff" stroke="#000033" stroke-width="3.4" paint-order="stroke">1.3</text><text x="984.68" y="529.23" text-anchor="middle" font-size="12.8" fill="#fff" stroke="#fff" stroke-width="0.45">1.3</text><text x="1014.98" y="542.21" text-anchor="middle" font-size="12.4" fill="#222" stroke="#8c9bab" stroke-width="3" paint-order="stroke">1.1</text><text x="1077.10" y="509.91" text-anchor="middle" font-size="12.8" fill="#fff" stroke="#000033" stroke-width="3.4" paint-order="stroke">1.6</text><text x="1077.10" y="509.91" text-anchor="middle" font-size="12.8" fill="#fff" stroke="#fff" stroke-width="0.45">1.6</text><text x="1107.40" y="510.01" text-anchor="middle" font-size="12.4" fill="#222" stroke="#8c9bab" stroke-width="3" paint-order="stroke">1.6</text><text x="1169.52" y="516.35" text-anchor="middle" font-size="12.8" fill="#fff" stroke="#000033" stroke-width="3.4" paint-order="stroke">1.5</text><text x="1169.52" y="516.35" text-anchor="middle" font-size="12.8" fill="#fff" stroke="#fff" stroke-width="0.45">1.5</text><text x="1199.82" y="548.65" text-anchor="middle" font-size="12.4" fill="#222" stroke="#8c9bab" stroke-width="3" paint-order="stroke">1.0</text><line x1="168.10" y1="432.50" x2="168.10" y2="418.50" stroke="#bbb" stroke-width="0.6" opacity="0.45"/><text x="168.10" y="417.35" text-anchor="middle" font-size="12.4" fill="#222" stroke="#fff" stroke-width="3" paint-order="stroke">2.5</text><line x1="260.52" y1="490.46" x2="260.52" y2="476.46" stroke="#bbb" stroke-width="0.6" opacity="0.45"/><text x="260.52" y="475.31" text-anchor="middle" font-size="12.4" fill="#222" stroke="#fff" stroke-width="3" paint-order="stroke">1.6</text><line x1="352.94" y1="471.14" x2="352.94" y2="457.14" stroke="#bbb" stroke-width="0.6" opacity="0.45"/><text x="352.94" y="455.99" text-anchor="middle" font-size="12.4" fill="#222" stroke="#fff" stroke-width="3" paint-order="stroke">1.9</text><line x1="445.36" y1="458.26" x2="445.36" y2="444.26" stroke="#bbb" stroke-width="0.6" opacity="0.45"/><text x="445.36" y="443.11" text-anchor="middle" font-size="12.4" fill="#222" stroke="#fff" stroke-width="3" paint-order="stroke">2.1</text><line x1="537.78" y1="490.46" x2="537.78" y2="476.46" stroke="#bbb" stroke-width="0.6" opacity="0.45"/><text x="537.78" y="475.31" text-anchor="middle" font-size="12.4" fill="#222" stroke="#fff" stroke-width="3" paint-order="stroke">1.6</text><line x1="630.20" y1="471.14" x2="630.20" y2="457.14" stroke="#bbb" stroke-width="0.6" opacity="0.45"/><text x="630.20" y="455.99" text-anchor="middle" font-size="12.4" fill="#222" stroke="#fff" stroke-width="3" paint-order="stroke">1.9</text><line x1="722.62" y1="484.02" x2="722.62" y2="470.02" stroke="#bbb" stroke-width="0.6" opacity="0.45"/><text x="722.62" y="468.87" text-anchor="middle" font-size="12.4" fill="#222" stroke="#fff" stroke-width="3" paint-order="stroke">1.7</text><line x1="815.04" y1="516.22" x2="815.04" y2="502.22" stroke="#bbb" stroke-width="0.6" opacity="0.45"/><text x="815.04" y="501.07" text-anchor="middle" font-size="12.4" fill="#222" stroke="#fff" stroke-width="3" paint-order="stroke">1.2</text><line x1="907.46" y1="496.90" x2="907.46" y2="482.90" stroke="#bbb" stroke-width="0.6" opacity="0.45"/><text x="907.46" y="481.75" text-anchor="middle" font-size="12.4" fill="#222" stroke="#fff" stroke-width="3" paint-order="stroke">1.5</text><line x1="999.88" y1="503.34" x2="999.88" y2="489.34" stroke="#bbb" stroke-width="0.6" opacity="0.45"/><text x="999.88" y="488.19" text-anchor="middle" font-size="12.4" fill="#222" stroke="#fff" stroke-width="3" paint-order="stroke">1.4</text><line x1="1092.30" y1="496.90" x2="1092.30" y2="482.90" stroke="#bbb" stroke-width="0.6" opacity="0.45"/><text x="1092.30" y="481.75" text-anchor="middle" font-size="12.4" fill="#222" stroke="#fff" stroke-width="3" paint-order="stroke">1.5</text><line x1="1184.72" y1="516.22" x2="1184.72" y2="502.22" stroke="#bbb" stroke-width="0.6" opacity="0.45"/><text x="1184.72" y="501.07" text-anchor="middle" font-size="12.4" fill="#222" stroke="#fff" stroke-width="3" paint-order="stroke">1.2</text><rect x="571.3" y="627" width="12.5" height="12.3" fill="#000033"/><text x="592.5" y="636.9" font-size="12.4" fill="#222">Actual</text><rect x="644.3" y="627" width="12.3" height="12.3" fill="#8c9bab"/><text x="665.5" y="636.9" font-size="12.4" fill="#222">PY</text><circle cx="704.8" cy="633.2" r="6.5" fill="#000033"/><text x="720" y="636.9" font-size="12.4" fill="#222">Target</text></svg>
</body></html>
